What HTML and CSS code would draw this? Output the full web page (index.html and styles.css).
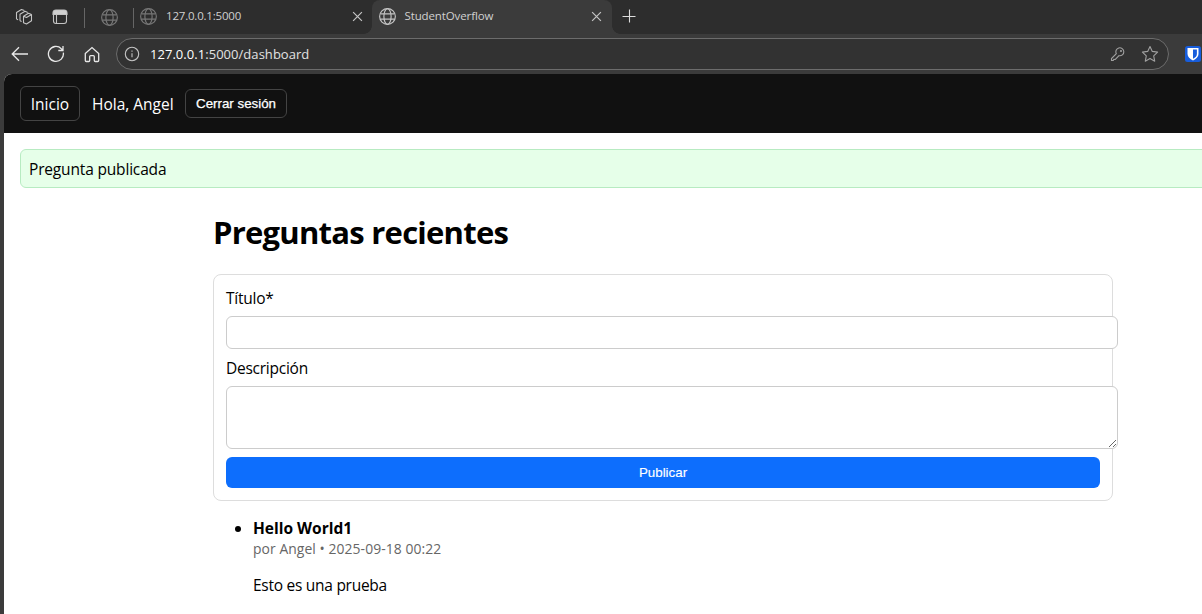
FILE: index.html
```html
<!DOCTYPE html>
<html lang="es">
<head>
<meta charset="utf-8">
<title>StudentOverflow</title>
<link rel="stylesheet" href="styles.css">
</head>
<body>
<svg class="defs" width="0" height="0">
  <symbol id="globe" viewBox="0 0 16 16"><circle cx="8" cy="8" r="7.4"/><ellipse cx="8" cy="8" rx="3.4" ry="7.4"/><path d="M1.3 5.5h13.4M1.3 10.5h13.4"/></symbol>
  <symbol id="cross" viewBox="0 0 10 10"><path d="M1 1l8 8M9 1l-8 8"/></symbol>
</svg>
<header class="tabs">
  <div class="tools">
    <svg class="icon workspaces" width="18" height="18" viewBox="0 0 18 18"><path stroke-linejoin="round" d="M8.500 8.300l3 1.200 5-3v6.200l-5 3.300-3-1.300zM8.500 8.300l5-3 3 1.200M5 12.800V6.300l5-3 2.800 1.100M1.500 11V4.500l5-3 2.800 1.100M5 12.800l1.600.700M1.500 11l1.600.700"/></svg>
    <svg class="icon" width="16" height="16" viewBox="0 0 16 16"><rect x="1.500" y="1.500" width="13" height="13" rx="2.500"/><path class="solid" d="M1 5.500V4a3 3 0 013-3h8a3 3 0 013 3v1.500z"/><path d="M4.500 5.500v9"/></svg>
  </div>
  <i class="divider"></i>
  <div class="pinned"><svg class="icon dim" width="17" height="17"><use href="#globe"/></svg></div>
  <i class="divider"></i>
  <div class="tab"><svg class="icon dim" width="17" height="17"><use href="#globe"/></svg><span class="tab-title ip">127.0.0.1:5000</span><svg class="icon close" width="11" height="11"><use href="#cross"/></svg></div>
  <div class="tab active"><svg class="icon" width="17" height="17"><use href="#globe"/></svg><span class="tab-title">StudentOverflow</span><svg class="icon close" width="11" height="11"><use href="#cross"/></svg></div>
  <svg class="icon plus" width="14" height="14" viewBox="0 0 14 14"><path d="M7.500 .500v13M.500 7.500h13"/></svg>
</header>
<div class="toolbar">
  <svg class="icon bright" width="18" height="16" viewBox="0 0 18 16"><path d="M17 8H1.500M8 1.200L1.200 8 8 14.800"/></svg>
  <svg class="icon bright" width="18" height="18" viewBox="0 0 18 18"><path d="M16.300 7.600A7.500 7.500 0 1 1 14.300 3.700L16 5.300M16 1v4.500h-4.700"/></svg>
  <svg class="icon bright home" width="16" height="17" viewBox="0 0 16 17"><path d="M1.300 7.600L8 1.600l6.700 6v6.900a1 1 0 01-1 1h-2.400a1 1 0 01-1-1V10.600a1 1 0 00-1-1H6.700a1 1 0 00-1 1v3.900a1 1 0 01-1 1H2.300a1 1 0 01-1-1z"/></svg>
  <div class="address">
    <svg class="icon" width="16" height="16" viewBox="0 0 16 16"><circle cx="8" cy="8" r="6.700"/><path d="M8 7.300v4M8 4.500v1.300"/></svg>
    <span class="url"><b>127.0.0.1</b>:5000/dashboard</span>
    <svg class="icon soft key" width="16" height="16" viewBox="0 0 16 16"><path d="M6.300 7.700A4 4 0 1 1 9 9.700L5.300 13.500 3.800 13.300 3.300 14.500H1.500v-2z"/><circle cx="11" cy="5" r=".500"/></svg>
    <svg class="icon soft" width="18" height="18" viewBox="0 0 18 18"><path stroke-linejoin="round" d="M9 1.500l2.300 4.900 5.300.700-3.900 3.700 1 5.400L9 13.600l-4.700 2.600 1-5.400L1.400 7.100l5.300-.700z"/></svg>
  </div>
  <svg class="shield" width="16" height="16" viewBox="0 0 16 16"><rect width="16" height="16" rx="2.500" fill="#175ddc"/><path d="M2.500 2h11v6c0 3-2.500 5-5.500 6.500C5 13 2.500 11 2.500 8z" fill="#fff"/><path d="M8 3.600h3.900V8c0 2-1.500 3.500-3.900 4.800z" fill="#175ddc"/></svg>
</div>
<div class="page">
  <nav class="nav"><a class="nav-link">Inicio</a><span class="hello">Hola, Angel</span><button class="logout">Cerrar sesión</button></nav>
  <div class="flash">Pregunta publicada</div>
  <main class="content">
    <h1 class="heading">Preguntas recientes</h1>
    <form class="card">
      <label class="label">Título*</label>
      <input class="field" type="text">
      <label class="label">Descripción</label>
      <textarea class="field area"></textarea>
      <button class="publish" type="button">Publicar</button>
    </form>
    <ul class="questions">
      <li class="question"><strong class="question-title">Hello World1</strong><div class="meta">por Angel • 2025-09-18 00:22</div><p class="text">Esto es una prueba</p></li>
    </ul>
  </main>
</div>
</body>
</html>
```
FILE: styles.css
```css
* { box-sizing: border-box; }
body { margin: 0; width: 1202px; height: 614px; overflow: hidden; background: #3b3b3b; font: 15.500px/21px "Open Sans", sans-serif; color: #000; }
.defs { display: block; height: 0; }
.icon { flex: none; fill: none; stroke: #c4c4c4; stroke-width: 1.100; }
.bright { stroke: #e8e8e8; stroke-width: 1.300; }
.soft { stroke: #a0a0a0; }
.dim { stroke: #777; }
.solid { fill: #d0d0d0; }
.tabs { display: flex; height: 34px; background: #2d2d2d; align-items: center; }
.tools { display: flex; gap: 19px; width: 84px; padding-left: 15px; align-items: center; }
.divider { width: 1px; height: 20px; margin-top: 1px; background: #666; }
.pinned { width: 48px; display: flex; justify-content: center; }
.tab { display: flex; align-items: center; width: 238px; height: 34px; padding: 0 9px 2px 6px; }
.tab.active { position: relative; width: 240px; background: #3b3b3b; border-radius: 8px 8px 0 0; padding-left: 6.500px; padding-right: 10px; }
.tab.active::before, .tab.active::after { content: ""; position: absolute; bottom: 0; width: 8px; height: 8px; }
.tab.active::before { left: -8px; background: radial-gradient(circle at 0 0, transparent 7.500px, #3b3b3b 8px); }
.tab.active::after { right: -8px; background: radial-gradient(circle at 100% 0, transparent 7.500px, #3b3b3b 8px); }
.tab-title { margin-left: 9px; font-size: 11.500px; line-height: 16px; color: #d0d0d0; letter-spacing: -.12px; }
.tab-title.ip { letter-spacing: -.2px; }
.close { margin-left: auto; }
.plus { margin: -2px 0 0 10px; stroke: #ddd; }
.toolbar { display: flex; align-items: center; height: 40px; padding-left: 11px; gap: 18px; }
.home { margin-left: 1px; }
.address { display: flex; align-items: center; width: 1053px; height: 32px; border: 1px solid #6c6c6c; border-radius: 16px; background: #323232; padding: 0 9px 0 7px; margin-left: -2px; }
.url { margin-left: 10px; font-size: 13px; color: #e2e2e2; letter-spacing: .04px; }
.url b { font-weight: 400; color: #fff; }
.key { margin-left: auto; margin-right: 15px; }
.shield { flex: none; margin-left: -2px; }
.page { margin-left: 4px; height: 540px; background: #fff; border-top-left-radius: 8px; overflow: hidden; }
.nav { display: flex; align-items: center; gap: 12px; height: 59px; padding: 0 16px; background: #111; color: #fff; }
.nav-link { width: 60px; height: 35px; border: 1px solid #444; border-radius: 6px; display: flex; align-items: center; justify-content: center; padding-top: 2px; }
.hello { width: 81px; white-space: nowrap; padding-top: 2px; }
.logout { width: 102px; height: 29px; padding: 0; border: 1px solid #444; border-radius: 6px; background: #111; color: #fff; font: 13.333px "Liberation Sans", Arial, sans-serif; -webkit-text-stroke: .25px #fff; }
.flash { width: 1300px; height: 39px; margin: 16px 16px 0; padding: 9px 8px; border: 1px solid #b7ebc1; border-radius: 6px; background: #e6ffe9; letter-spacing: -.17px; }
.content { width: 900px; margin: 23px 0 0 209px; }
.heading { margin: 0; font-size: 31px; line-height: 43px; font-weight: 700; letter-spacing: -.75px; }
.card { display: flex; flex-direction: column; height: 227px; margin-top: 20px; padding: 13px 12px 12px; border: 1px solid #ddd; border-radius: 8px; }
.label { height: 21px; margin-bottom: 7px; letter-spacing: -.25px; }
.field { width: 892px; height: 33px; flex: none; border: 1px solid #ccc; border-radius: 6px; background: #fff; padding: 8px; margin: 0 0 9px; }
.area { height: 63px; margin-bottom: 8px; resize: vertical; }
.publish { height: 31px; padding: 0; border: 0; border-radius: 6px; background: #0d6efd; color: #fff; font: 13.333px "Liberation Sans", Arial, sans-serif; -webkit-text-stroke: .15px #fff; }
.questions { margin: 17px 0 0; padding-left: 40px; }
.question-title { font-weight: 700; }
.meta { font-size: 13.900px; line-height: 19px; color: #666; letter-spacing: .07px; }
.text { margin: 17px 0; letter-spacing: -.27px; }
```
